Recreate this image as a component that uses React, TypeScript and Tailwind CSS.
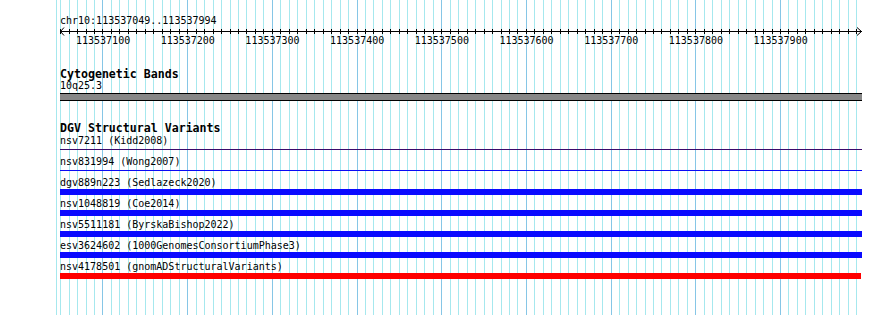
import React from "react";

const S = 0.8469;
const X0 = 59.8;
const px = (b: number) => Math.floor(X0 + (b - 49) * S);

const grid: number[] = [];
for (let b = 50; b <= 990; b += 10) grid.push(b);
const majors = [100, 200, 300, 400, 500, 600, 700, 800, 900];

type Row = { label: string; kind: "thin" | "bar"; color: string; w?: number };
const rows: Row[] = [
  { label: "nsv7211 (Kidd2008)", kind: "thin", color: "bg-[#3a0a6c]" },
  { label: "nsv831994 (Wong2007)", kind: "thin", color: "bg-[#0a0af5]" },
  { label: "dgv889n223 (Sedlazeck2020)", kind: "bar", color: "bg-[#0a0aff]" },
  { label: "nsv1048819 (Coe2014)", kind: "bar", color: "bg-[#0a0aff]" },
  { label: "nsv5511181 (ByrskaBishop2022)", kind: "bar", color: "bg-[#0a0aff]" },
  { label: "esv3624602 (1000GenomesConsortiumPhase3)", kind: "bar", color: "bg-[#0a0aff]" },
  { label: "nsv4178501 (gnomADStructuralVariants)", kind: "bar", color: "bg-[#ff0000]", w: 801 },
];

const mono = "font-['DejaVu_Sans_Mono','Liberation_Mono',monospace]";

export default function App() {
  return (
    <div className={`relative w-[890px] h-[315px] bg-white overflow-hidden text-black ${mono}`}>
      <svg className="absolute inset-0" width={890} height={315} shapeRendering="crispEdges">
        <line x1={56.5} x2={56.5} y1={0} y2={315} stroke="#a6e8ee" strokeWidth={1} />
        {grid.map((b) => (
          <line
            key={b}
            x1={px(b) + 0.5}
            x2={px(b) + 0.5}
            y1={0}
            y2={315}
            stroke={b % 100 === 0 ? "#86c6e6" : "#a6e8ee"}
            strokeWidth={1}
          />
        ))}
      </svg>

      <div className="relative pl-[60px] pt-[15px] w-[862px]">
        <div className="text-[10px] leading-[12px] whitespace-pre">chr10:113537049..113537994</div>
        <svg width={803} height={8} className="block overflow-visible" shapeRendering="crispEdges">
          <line x1={0} x2={802} y1={4.5} y2={4.5} stroke="#000" strokeWidth={1} />
          <polyline points="4,0.5 0.5,4.5 4,8.5" fill="none" stroke="#000" strokeWidth={1} shapeRendering="auto" />
          <polyline points="797,0.5 801.5,4.5 797,8.5" fill="none" stroke="#000" strokeWidth={1} shapeRendering="auto" />
          {grid.map((b) => (
            <line key={b} x1={px(b) - 60 + 0.5} x2={px(b) - 60 + 0.5} y1={2} y2={7} stroke="#000" strokeWidth={1} />
          ))}
        </svg>
        <div className="relative h-[12px] text-[10px] leading-[12px]">
          {majors.map((b) => (
            <span
              key={b}
              className="absolute top-0 w-[54px] text-center whitespace-pre"
              style={{ left: X0 + (b - 49) * S - 60 - 27 }}
            >
              {113537000 + b}
            </span>
          ))}
        </div>

        <div className="mt-[21px] text-[11.6px] font-bold leading-[12px] whitespace-pre">Cytogenetic Bands</div>
        <div className="text-[10px] leading-[12px]">10q25.3</div>
        <div className="mt-[1px] h-[8px] w-[802px] border-y border-black bg-[#878787]" />

        <div className="mt-[21px] text-[11.6px] font-bold leading-[13px] whitespace-pre">DGV Structural Variants</div>
        <div className="flex flex-col gap-[3px]">
          {rows.map((r) => (
            <div key={r.label} className="flex flex-col">
              <div className="text-[10px] leading-[12px] whitespace-pre">{r.label}</div>
              <div className="h-[6px] w-[802px] flex flex-col">
                {r.kind === "thin" ? (
                  <div className={`mt-[2px] h-[1px] w-[802px] ${r.color}`} />
                ) : (
                  <div className={`h-[6px] ${r.color} ${r.w === 801 ? "w-[801px]" : "w-[802px]"}`} />
                )}
              </div>
            </div>
          ))}
        </div>
      </div>
    </div>
  );
}
